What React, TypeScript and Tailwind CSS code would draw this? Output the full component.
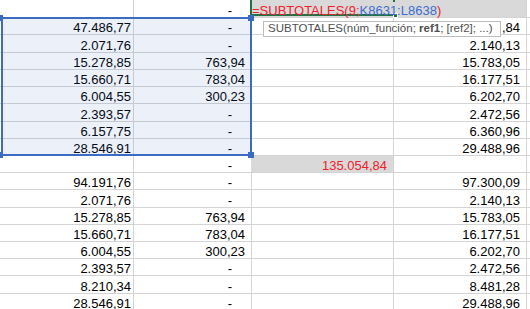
import clsx from 'clsx';

// rows that are one pixel taller, so the grid lines land where the sheet has them
const TALL = [0, 2, 6, 11, 16];

// the tooltip hides the start of the value in row 2, only ",84" shows
const ROWS: [string, string, string][] = [
  ['', '-', ''],
  ['47.486,77', '-', ',84'],
  ['2.071,76', '-', '2.140,13'],
  ['15.278,85', '763,94', '15.783,05'],
  ['15.660,71', '783,04', '16.177,51'],
  ['6.004,55', '300,23', '6.202,70'],
  ['2.393,57', '-', '2.472,56'],
  ['6.157,75', '-', '6.360,96'],
  ['28.546,91', '-', '29.488,96'],
  ['', '-', ''],
  ['94.191,76', '-', '97.300,09'],
  ['2.071,76', '-', '2.140,13'],
  ['15.278,85', '763,94', '15.783,05'],
  ['15.660,71', '783,04', '16.177,51'],
  ['6.004,55', '300,23', '6.202,70'],
  ['2.393,57', '-', '2.472,56'],
  ['8.210,34', '-', '8.481,28'],
  ['28.546,91', '-', '29.488,96'],
];

function Cell({ className, children }: { className?: string; children?: React.ReactNode }) {
  return (
    <div
      className={clsx(
        'shrink-0 flex items-end justify-end border-r border-b border-[#d4d4d4] leading-[13px] whitespace-nowrap',
        className
      )}
    >
      {children}
    </div>
  );
}

function Row({ r, i }: { r: [string, string, string]; i: number }) {
  return (
    <div className={clsx('flex', TALL.includes(i) ? 'h-[18px]' : 'h-[17px]')}>
      <Cell className="w-[134px] pr-[2px]">{r[0]}</Cell>
      <Cell
        className={clsx(
          'w-[118px]',
          r[1] === '-' ? 'pr-[19px]' : 'pr-[6px]',
          i === 9 && 'border-r-[#d9d9d9]'
        )}
      >
        {r[1]}
      </Cell>
      <Cell className={clsx('w-[142px] pr-[6px]', (i === 0 || i === 9) && 'bg-[#d9d9d9]')}>
        {i === 9 && <span className="text-[#f0202a]">135.054,84</span>}
      </Cell>
      <Cell className={clsx('w-[133px] pr-[6px]', i === 0 && 'bg-[#d9d9d9]')}>{r[2]}</Cell>
      <Cell className="flex-1 border-r-0" />
    </div>
  );
}

export default function App() {
  return (
    <div className="relative w-[530px] h-[309px] overflow-hidden bg-white text-[13px] text-black font-['Liberation_Sans',Arial,sans-serif]">
      <div className="flex flex-col">
        {ROWS.map((r, i) => (
          <Row key={i} r={r} i={i} />
        ))}
      </div>

      {/* range referenced by the formula */}
      <div className="absolute left-[1px] top-[17px] w-[251px] h-[139px] border-2 border-[#3b6cc4] bg-[#3b6cc4]/10 pointer-events-none" />

      {/* active cell being edited */}
      <div className="absolute left-[250px] top-[-2px] w-[145px] h-[18px] border-2 border-[#217346]" />
      <div className="absolute left-[392px] top-[2px] w-[4px] h-[11px] bg-[#d9d9d9]" />
      <div className="absolute left-[393px] top-[13px] w-[5px] h-[5px] bg-[#217346] border border-white" />
      <div className="absolute left-[252px] top-[4px] leading-[13px] whitespace-nowrap">
        <span className="text-[#f0202a]">=SUBTOTALES(9;</span>
        <span className="text-[#3c6dd0]">K8631:L8638</span>
        <span className="text-[#f0202a]">)</span>
      </div>

      {/* corner handles of the range */}
      <div className="absolute left-[-3px] top-[15px] w-[6px] h-[6px] bg-[#3b6cc4]" />
      <div className="absolute left-[248px] top-[15px] w-[6px] h-[6px] bg-[#3b6cc4]" />
      <div className="absolute left-[-3px] top-[152px] w-[6px] h-[6px] bg-[#3b6cc4]" />
      <div className="absolute left-[248px] top-[152px] w-[6px] h-[6px] bg-[#3b6cc4]" />

      {/* function tooltip */}
      <div className="absolute left-[263px] top-[21px] w-[238px] h-[16px] overflow-hidden bg-white border border-[#bdbdbd] pl-[4px] text-[11.5px] leading-[12px] text-[#505050] whitespace-nowrap">
        SUBTOTALES(núm_función; <span className="font-bold">ref1</span>; [ref2]; ...)
      </div>
    </div>
  );
}
